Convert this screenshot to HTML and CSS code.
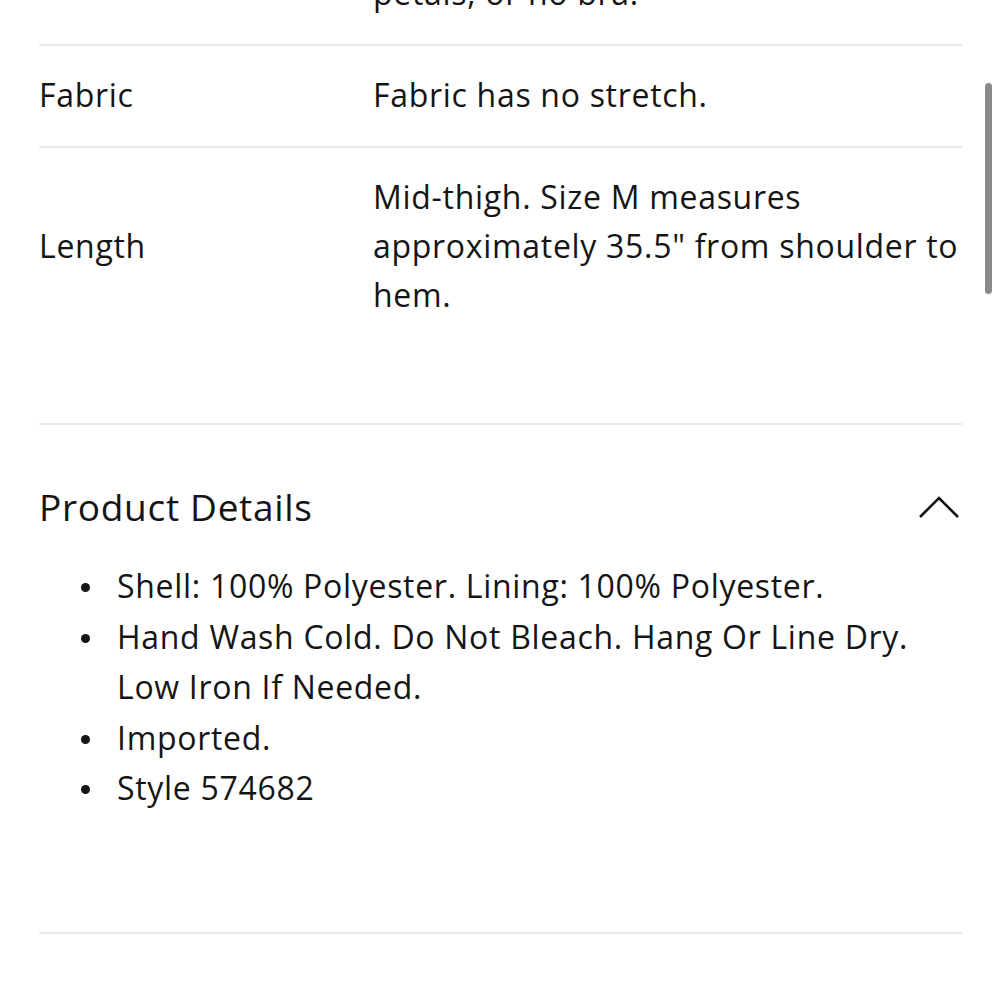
FILE: index.html
```html
<!DOCTYPE html>
<html>
<head>
<meta charset="utf-8">
<link rel="stylesheet" href="styles.css">
</head>
<body>
<div class="page">
  <section class="fit">
    <div class="row row-cut">
      <div class="label"></div>
      <div class="value">petals, or no bra.</div>
    </div>
    <div class="row">
      <div class="label">Fabric</div>
      <div class="value">Fabric has no stretch.</div>
    </div>
    <div class="row">
      <div class="label">Length</div>
      <div class="value">Mid-thigh. Size M measures approximately 35.5" from shoulder to hem.</div>
    </div>
  </section>
  <section class="details">
    <div class="details-head">
      <h2 class="details-title">Product Details</h2>
      <svg class="chevron" width="42" height="24" viewBox="0 0 42 24"><path d="M2 22 L21 3 L40 22" fill="none" stroke="#111" stroke-width="2.6"/></svg>
    </div>
    <ul class="bullets">
      <li>Shell: 100% Polyester. Lining: 100% Polyester.</li>
      <li>Hand Wash Cold. Do Not Bleach. Hang Or Line Dry. Low Iron If Needed.</li>
      <li>Imported.</li>
      <li>Style 574682</li>
    </ul>
  </section>
</div>
<div class="scrollbar"></div>
</body>
</html>
```
FILE: styles.css
```css
html, body {
  margin: 0;
  padding: 0;
  background: #fff;
  overflow: hidden;
}
body {
  font-family: "Open Sans", Lato, sans-serif;
  color: #151515;
  letter-spacing: 0.7px;
}
.page {
  margin: 0 38px 0 39px;
}
.fit {
  margin-top: -32px;
  padding-bottom: 77px;
  border-bottom: 2px solid #e8e8e8;
}
.row {
  display: grid;
  grid-template-columns: 334px 1fr;
  align-items: center;
  font-size: 32px;
  line-height: 49px;
  padding: 24px 0 27px;
}
.row + .row {
  border-top: 2px solid #e8e8e8;
}
.row-cut {
  padding: 0 0 27px;
}
.details {
  padding: 60px 0 118px;
  border-bottom: 2px solid #e8e8e8;
}
.details-head {
  display: flex;
  justify-content: space-between;
  align-items: center;
}
.details-title {
  margin: 0;
  font-size: 37px;
  font-weight: 400;
  line-height: 44px;
}
.chevron {
  margin-right: 2px;
}
.bullets {
  list-style: none;
  margin: 32px 0 0;
  padding: 0;
  font-size: 32px;
  line-height: 50.5px;
}
.bullets li {
  display: flex;
}
.bullets li::before {
  content: "";
  flex: none;
  width: 9px;
  height: 9px;
  border-radius: 50%;
  background: #151515;
  margin: 22px 27px 0 42px;
}
.scrollbar {
  position: fixed;
  left: 985px;
  top: 83px;
  width: 7px;
  height: 211px;
  border-radius: 4px;
  background: #8a8a8a;
}
```
